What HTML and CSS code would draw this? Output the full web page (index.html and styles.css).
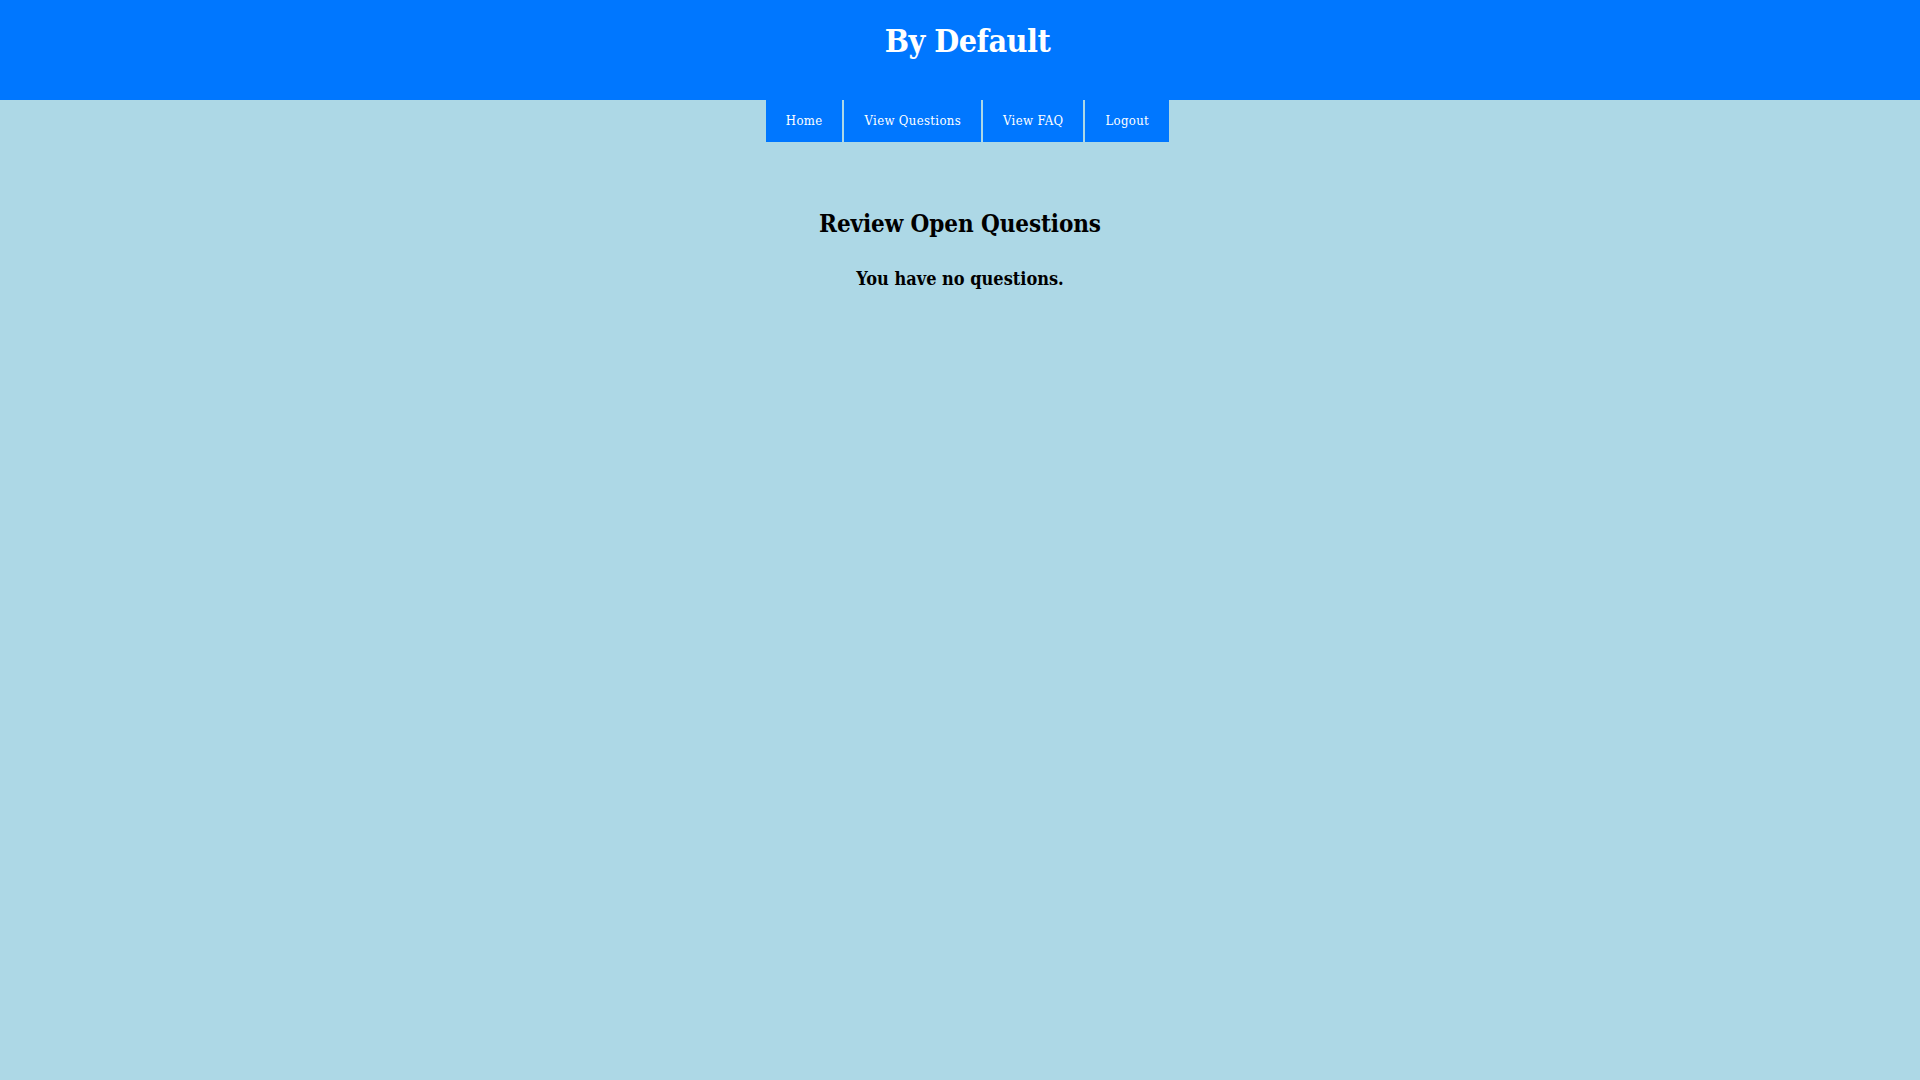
FILE: index.html
```html
<!DOCTYPE html>
<html lang="en">
<head>
<meta charset="utf-8">
<title>By Default</title>
<link rel="stylesheet" href="styles.css">
</head>
<body>
<header class="site-header">
  <h1 class="site-title">By Default</h1>
</header>
<nav class="main-nav">
  <ul class="nav-list">
    <li><a class="nav-link" href="#">Home</a></li>
    <li><a class="nav-link" href="#">View Questions</a></li>
    <li><a class="nav-link" href="#">View FAQ</a></li>
    <li><a class="nav-link" href="#">Logout</a></li>
  </ul>
</nav>
<main class="content">
  <h2 class="page-title">Review Open Questions</h2>
  <p class="empty-msg">You have no questions.</p>
</main>
</body>
</html>
```
FILE: styles.css
```css
html, body {
  margin: 0;
  padding: 0;
}
body {
  background: #add8e6;
  font-family: "DejaVu Serif Condensed", "DejaVu Serif", serif;
  color: #000;
  min-height: 1080px;
}
.site-header {
  background: #0077ff;
  padding: 21px 0 39px 15px;
  text-align: center;
}
.site-title {
  margin: 0;
  font-size: 32px;
  line-height: 40px;
  font-weight: bold;
  letter-spacing: -0.5px;
  color: #fff;
}
.main-nav {
  display: flex;
  justify-content: center;
  padding-left: 15px;
}
.nav-list {
  display: flex;
  gap: 2px;
  list-style: none;
  margin: 0;
  padding: 0;
}
.nav-link {
  display: block;
  background: #0077ff;
  color: #fff;
  text-decoration: none;
  font-size: 13px;
  line-height: 42px;
  letter-spacing: 0.35px;
  padding: 0 20px;
}
.content {
  text-align: center;
  padding-top: 68px;
}
.page-title {
  margin: 0;
  font-size: 24px;
  line-height: 28px;
  font-weight: bold;
  letter-spacing: -0.1px;
}
.empty-msg {
  margin: 30px 0 0;
  font-size: 18px;
  line-height: 22px;
  font-weight: bold;
}
```
